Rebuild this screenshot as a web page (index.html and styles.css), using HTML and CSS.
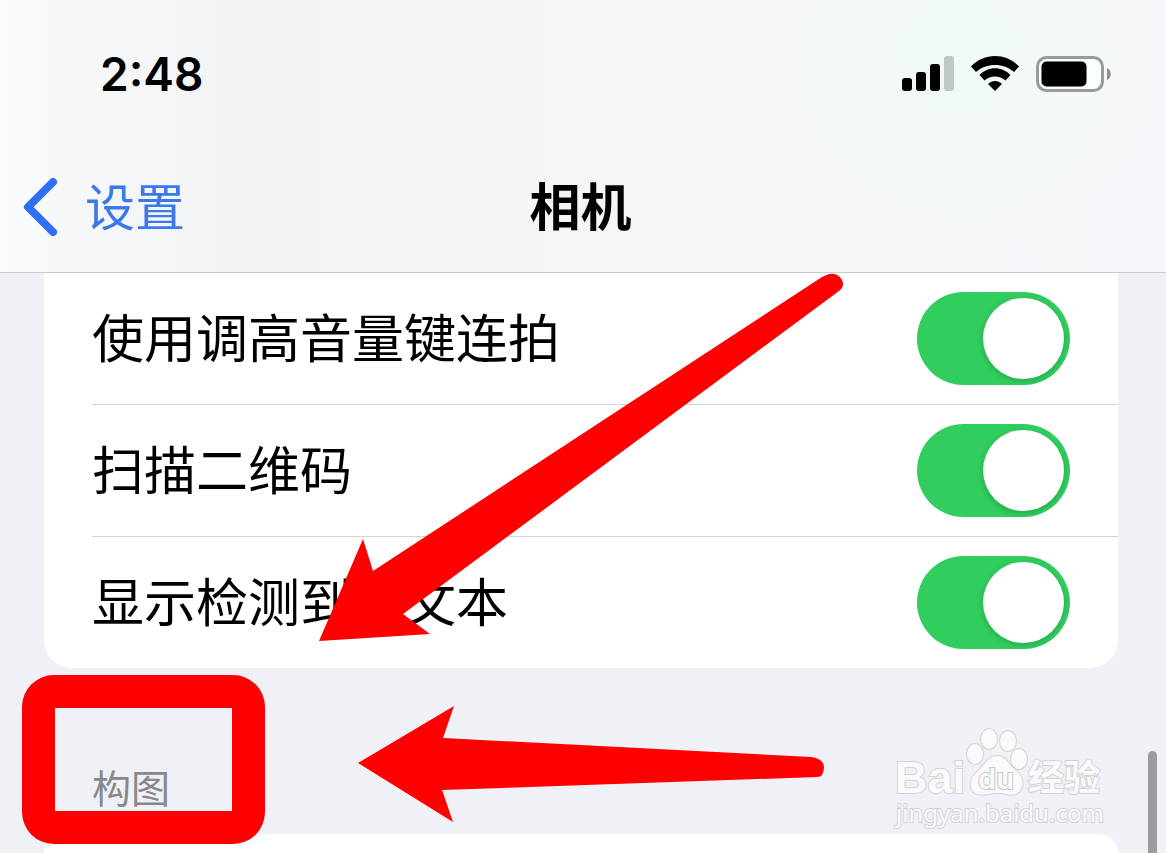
FILE: index.html
```html
<!DOCTYPE html>
<html lang="zh-CN">
<head>
    <meta charset="UTF-8">
    <meta name="viewport" content="width=device-width, initial-scale=1.0">
    <title>相机</title>
    <link rel="stylesheet" href="styles.css">
</head>
<body>

    <header class="header">
        <div class="status">
            <div class="time">2:48</div>
            <div class="status-icons">
                <svg width="52" height="36" viewBox="0 0 52 36">
                    <rect x="0" y="22" width="10" height="13" rx="3"/>
                    <rect x="14" y="16" width="10" height="19" rx="3"/>
                    <rect x="28" y="8" width="10" height="27" rx="3"/>
                    <rect x="42" y="0" width="10" height="35" rx="3" fill="#bfc9c4"/>
                </svg>
                <svg width="48" height="36" viewBox="0 0 48 36">
                    <path d="M0 10.500C13-3.500 35-3.500 48 10.500L43 16C33 6.500 15 6.500 5 16Z"/>
                    <path d="M8.500 19C17 10 31 10 39.500 19L34.500 24.500C28.500 19 19.500 19 13.500 24.500Z"/>
                    <path d="M17 28C21 24 27 24 31 28L24 35Z"/>
                </svg>
                <svg width="75" height="36" viewBox="0 0 75 36">
                    <rect x="1.500" y="1.500" width="65" height="33" rx="9" fill="#fbfffc" stroke="#979b99" stroke-width="3"/>
                    <rect x="5.500" y="5.500" width="45" height="25" rx="5"/>
                    <path d="M71 12C76 14 76 22 71 24Z" fill="#8b8e8d"/>
                </svg>
            </div>
        </div>
        <nav class="nav">
            <a class="back" href="#">
                <svg width="34" height="58" viewBox="0 0 34 58">
                    <path d="M30 4L5 29L30 54" fill="none" stroke="#2f6ef6" stroke-width="8" stroke-linecap="round" stroke-linejoin="round"/>
                </svg>
                <span class="label">设置</span>
            </a>
            <h1 class="title label">相机</h1>
        </nav>
    </header>

    <main class="content">
        <div class="card first">
            <label class="row">
                <span class="label">使用调高音量键连拍</span>
                <input class="switch" type="checkbox" checked>
            </label>
            <label class="row">
                <span class="label">扫描二维码</span>
                <input class="switch" type="checkbox" checked>
            </label>
            <label class="row">
                <span class="label">显示检测到的文本</span>
                <input class="switch" type="checkbox" checked>
            </label>
        </div>
        <h2 class="section-title">构图</h2>
        <div class="card rest"></div>
    </main>

    <div class="scrollbar"></div>

    <!-- red marks over the list -->
    <div class="highlight"></div>
    <svg class="arrows" width="1166" height="853" viewBox="0 0 1166 853">
        <path d="M319 641L363 539L373 571L822 277Q836 269 842 280Q845 286 839 291L403 614L430 634Z"/>
        <path d="M358 763L454 706L443 738L811 757Q824 759 824 767Q824 777 817 777L442 790L453 822Z"/>
    </svg>

    <svg class="watermark" width="220" height="110" viewBox="0 0 220 110">
        <text class="wm-bai" x="3" y="69">Bai</text>
        <g class="wm-paw">
            <ellipse cx="83" cy="30" rx="8" ry="10"/>
            <ellipse cx="97" cy="15" rx="8" ry="10"/>
            <ellipse cx="116" cy="17" rx="8" ry="10"/>
            <ellipse cx="127" cy="35" rx="8" ry="10"/>
            <path d="M105 32C113 32 116 39 122 45C128 50 132 55 130 63C128 70 121 72 114 70Q105 68 96 70C88 72 80 70 79 63C77 55 83 50 88 45C94 39 97 32 105 32Z"/>
        </g>
        <text class="wm-du" x="104" y="65">du</text>
        <text class="wm-cn" x="136" y="67">经验</text>
        <text class="wm-url" x="4" y="98">jingyan.baidu.com</text>
    </svg>

</body>
</html>
```
FILE: styles.css
```css
*{
    margin: 0;
    padding: 0;
    box-sizing: border-box;
}
body{
    position: relative;
    display: flex;
    flex-direction: column;
    height: 100vh;
    overflow: hidden;
    background-color: #f0f1f6;
    color: #000;
    font-family: "Liberation Sans", "Noto Sans CJK SC", sans-serif;
}
.header{
    padding-bottom: 6px;
    border-bottom: 1px solid #c9cacd;
    background: radial-gradient(circle at 82% 20%, #f0faf5 0, #f0faf500 200px),
        linear-gradient(90deg, #f8fafc 0%, #f2f3f5 20%, #f4f5f7 50%, #f7f8fb 100%);
}
.status{
    display: flex;
    justify-content: space-between;
    align-items: center;
    height: 148px;
    padding: 0 55px 0 100px;
}
.time{
    font-family: Inter, sans-serif;
    font-size: 46px;
    font-weight: 600;
}
.status-icons{
    display: flex;
    gap: 17px;
}
.nav{
    display: grid;
    grid-template-columns: 1fr auto 1fr;
    align-items: center;
    height: 118px;
    padding: 0 28px 0 23px;
}
.back{
    display: flex;
    align-items: center;
    gap: 28px;
    color: #3b78ea;
    font-size: 50px;
    text-decoration: none;
}
.title{
    font-size: 51px;
    font-weight: 600;
}
.label{
    padding-bottom: 6px;
}
.content{
    display: flex;
    flex-direction: column;
    flex: 1;
}
.card{
    margin: 0 48px 0 44px;
    padding-left: 48px;
    background-color: #fff;
    border-radius: 28px;
}
.first{
    border-top-left-radius: 0;
    border-top-right-radius: 0;
}
.rest{
    flex: 1;
    border-bottom-left-radius: 0;
    border-bottom-right-radius: 0;
}
.row{
    display: flex;
    justify-content: space-between;
    align-items: center;
    height: 132px;
    padding-right: 48px;
    border-bottom: 1px solid #d2d2d5;
    font-size: 52px;
}
.row:last-child{
    height: 131px;
    border-bottom: none;
}
.switch{
    appearance: none;
    width: 153px;
    height: 93px;
    padding: 6px;
    border-radius: 47px;
    background-color: #32cd5f;
    cursor: pointer;
}
.switch::before{
    content: "";
    display: block;
    width: 81px;
    height: 81px;
    border-radius: 50%;
    background-color: #fff;
    box-shadow: 0 2px 6px rgba(0, 80, 20, 0.3);
}
.switch:checked::before{
    margin-left: auto;
}
.section-title{
    height: 166px;
    padding: 98px 0 0 92px;
    color: #87888b;
    font-size: 39px;
    font-weight: 400;
    line-height: 48px;
}
.scrollbar{
    position: absolute;
    right: 9px;
    top: 751px;
    bottom: -10px;
    width: 9px;
    border-radius: 5px;
    background-color: #9b9ca0;
}
.highlight{
    position: absolute;
    left: 22px;
    top: 675px;
    width: 243px;
    height: 169px;
    border: 33px solid #ff0000;
    border-radius: 32px;
}
.arrows{
    position: absolute;
    left: 0;
    top: 0;
    fill: #ff0000;
    pointer-events: none;
}
.watermark{
    position: absolute;
    right: 54px;
    top: 724px;
    fill: #fafafb;
    stroke: #d2d3d7;
    stroke-width: 2px;
    paint-order: stroke;
    pointer-events: none;
}
.wm-bai{
    font-size: 45px;
    font-weight: 700;
}
.wm-du{
    stroke: #c4c5c9;
    font-family: Inter, sans-serif;
    font-size: 29px;
    font-weight: 600;
    text-anchor: middle;
}
.wm-cn{
    font-size: 36px;
    font-weight: 700;
}
.wm-url{
    font-family: "Noto Sans", sans-serif;
    font-size: 24px;
}
```
